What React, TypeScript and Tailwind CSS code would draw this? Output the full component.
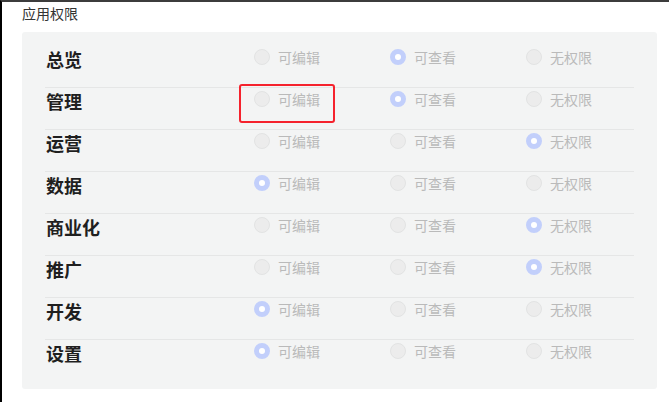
import React from "react";

type Level = "edit" | "view" | "none";

const options: { key: Level; label: string }[] = [
  { key: "edit", label: "可编辑" },
  { key: "view", label: "可查看" },
  { key: "none", label: "无权限" },
];

const rows: { name: string; value: Level }[] = [
  { name: "总览", value: "view" },
  { name: "管理", value: "view" },
  { name: "运营", value: "none" },
  { name: "数据", value: "edit" },
  { name: "商业化", value: "none" },
  { name: "推广", value: "none" },
  { name: "开发", value: "edit" },
  { name: "设置", value: "edit" },
];

function Radio({ checked }: { checked: boolean }) {
  return checked ? (
    <span className="box-border h-4 w-4 shrink-0 rounded-full border-[5px] border-[#c2cffb] bg-white" />
  ) : (
    <span className="box-border h-4 w-4 shrink-0 rounded-full border border-[#e2e3e3] bg-[#ececec]" />
  );
}

export default function App() {
  return (
    <div
      className="box-border h-[402px] w-[669px] overflow-hidden border-l-2 border-t-2 border-l-black border-t-[#3c3c3c] bg-white pl-[20px] pr-[12px]"
      style={{ fontFamily: '"Noto Sans CJK SC", "Noto Sans", sans-serif' }}
    >
      <div className="pt-[1px] text-[14px] leading-[20px] text-[#333333]">应用权限</div>
      <div className="mt-[9px] rounded-[3px] bg-[#f3f4f4] px-[23px] pb-[7px] pt-[14px]">
        {rows.map((row, i) => (
          <div
            key={row.name}
            className={`flex h-[42px] items-start ${
              i < rows.length - 1 ? "border-b border-[#e5e6e6]" : ""
            }`}
          >
            <div className="w-[209px] shrink-0 pl-[1px] text-[18px] font-bold leading-[26px] text-[#1f1f1f]">
              {row.name}
            </div>
            {options.map((opt, j) => (
              <div
                key={opt.key}
                className={`relative flex h-[22px] items-center gap-2 ${
                  j < options.length - 1 ? "w-[136px] shrink-0" : "flex-1"
                }`}
              >
                <Radio checked={row.value === opt.key} />
                <span className="text-[14px] leading-[20px] text-[#bababa]">{opt.label}</span>
                {i === 1 && opt.key === "edit" && (
                  <div className="absolute left-[-15px] top-[-4px] h-[39px] w-[96px] rounded-[3px] border-2 border-[#f5222d]" />
                )}
              </div>
            ))}
          </div>
        ))}
      </div>
    </div>
  );
}
